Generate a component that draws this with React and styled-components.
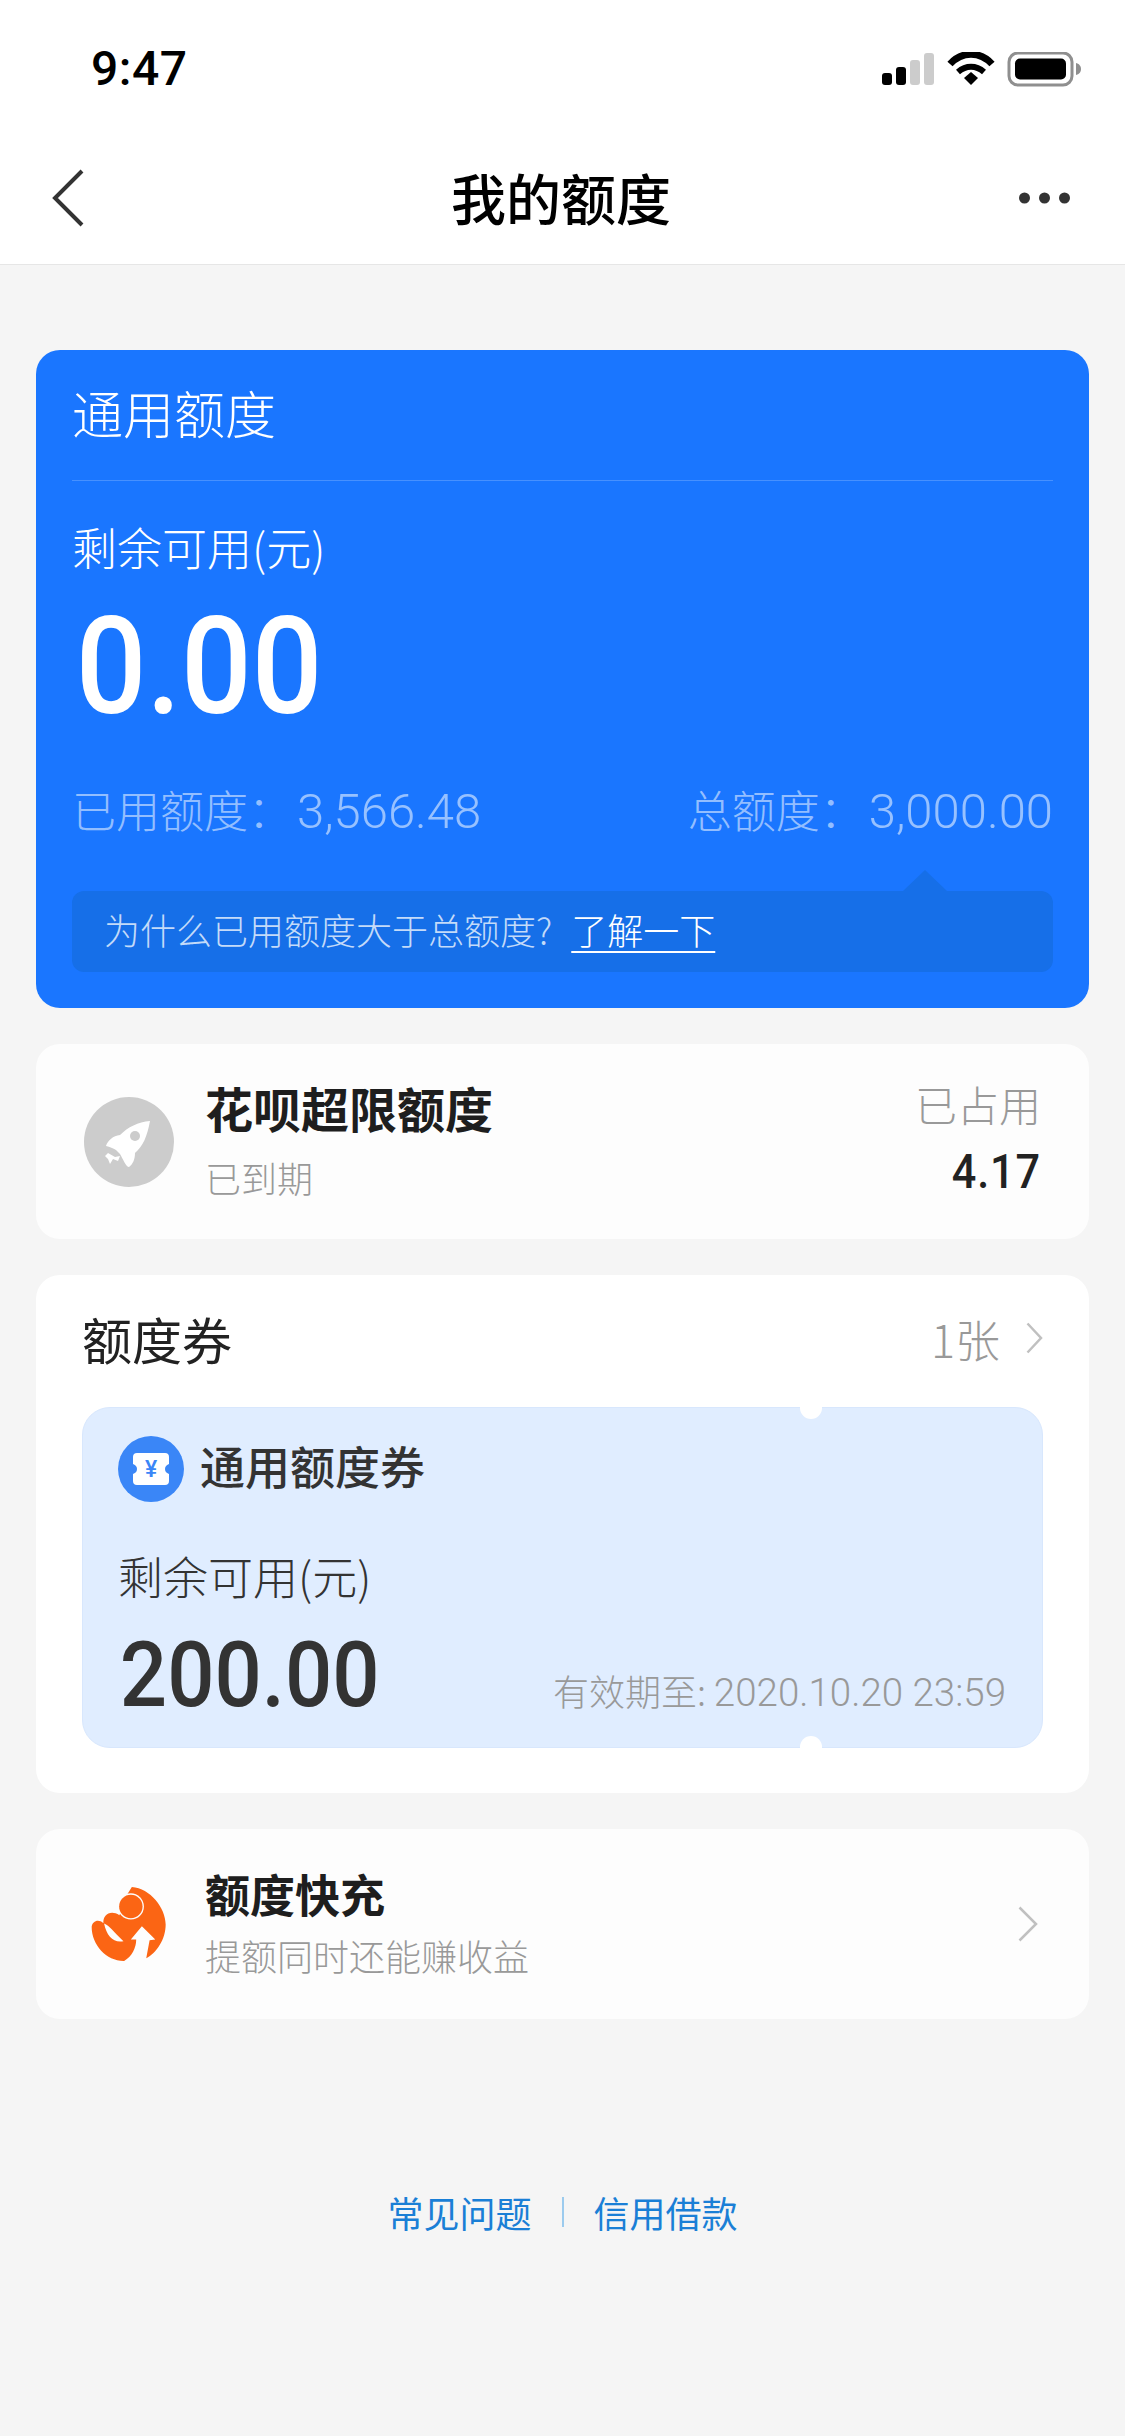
import React from 'react';
import styled, { createGlobalStyle } from 'styled-components';

const GlobalStyle = createGlobalStyle`
  html, body {
    margin: 0;
    padding: 0;
    background: #f5f5f5;
  }
  body {
    font-family: 'Noto Sans CJK SC', 'Noto Sans', sans-serif;
  }
  * {
    box-sizing: border-box;
  }
`;

const Page = styled.div`
  width: 1125px;
  height: 2436px;
  overflow: hidden;
  background: #f5f5f5;
`;

const TopArea = styled.header`
  background: #fff;
  border-bottom: 1px solid #e6e6e6;
`;

const StatusBar = styled.div`
  height: 132px;
  padding: 46px 43px 0 91px;
  display: flex;
  justify-content: space-between;
  align-items: flex-start;
`;

const Clock = styled.span`
  font-family: Roboto, sans-serif;
  font-size: 48px;
  line-height: 46px;
  font-weight: 500;
  letter-spacing: 0.5px;
  color: #000;
`;

const NavBar = styled.nav`
  height: 132px;
  padding: 0 55px 0 52px;
  display: grid;
  grid-template-columns: 100px 1fr 100px;
  align-items: center;
`;

const NavTitle = styled.h1`
  margin: 0;
  padding-bottom: 5px;
  text-align: center;
  font-size: 55px;
  line-height: 70px;
  font-weight: 500;
  color: #000;
`;

const NavRight = styled.div`
  display: flex;
  justify-content: flex-end;
`;

const Content = styled.main`
  padding: 85px 36px 0;
  display: flex;
  flex-direction: column;
  gap: 36px;
`;

const QuotaCard = styled.section`
  background: #1a76ff;
  border-radius: 24px;
  padding: 0 36px 36px;
  color: #fff;
`;

const QuotaHeader = styled.div`
  height: 131px;
  border-bottom: 1px solid rgba(255, 255, 255, 0.2);
  font-size: 51px;
  line-height: 124px;
  font-weight: 300;
`;

const QuotaLabel = styled.div`
  margin-top: 36px;
  font-size: 45px;
  line-height: 60px;
  font-weight: 300;
`;

// the DIN-style figures run narrower than Roboto
const Figures = styled.div`
  font-family: Roboto, sans-serif;
  font-weight: 500;
  transform: scaleX(${(p) => p.$squeeze});
  transform-origin: ${(p) => p.$origin || 'left'} center;
`;

const QuotaAmount = styled(Figures)`
  margin-top: 25px;
  padding-left: 4px;
  font-size: 136px;
  line-height: 130px;
`;

const QuotaStats = styled.div`
  margin-top: 47px;
  height: 60px;
  display: flex;
  justify-content: space-between;
  font-size: 44px;
  line-height: 60px;
  font-weight: 300;
  color: rgba(255, 255, 255, 0.55);
`;

const StatNumber = styled.span`
  margin-left: 5px;
  font-family: Roboto, sans-serif;
  font-size: 49px;
  font-weight: 300;
`;

const TipBox = styled.div`
  position: relative;
  margin-top: 52px;
  height: 81px;
  padding-left: 32px;
  background: #166fe8;
  border-radius: 12px;
  font-size: 36px;
  line-height: 77px;
  font-weight: 300;
  color: rgba(255, 255, 255, 0.75);

  &::before {
    content: '';
    position: absolute;
    top: -21px;
    right: 106px;
    border-left: 22px solid transparent;
    border-right: 22px solid transparent;
    border-bottom: 21px solid #166fe8;
  }
`;

const TipLink = styled.a`
  margin-left: 19px;
  color: #fff;
  text-decoration: underline;
  text-underline-offset: 6px;
  text-decoration-thickness: 2px;
`;

const RowCard = styled.section`
  height: ${(p) => p.$height}px;
  padding: 0 48px;
  background: #fdfdfd;
  border-radius: 24px;
  display: flex;
  align-items: center;
`;

const RocketBadge = styled.div`
  width: 90px;
  height: 90px;
  margin-right: 31px;
  flex: none;
  border-radius: 50%;
  background: #cccccc;
`;

const RowText = styled.div`
  flex: 1;
  padding-bottom: 4px;
`;

const RowTitle = styled.div`
  font-size: ${(p) => p.$size}px;
  line-height: 60px;
  font-weight: 700;
  color: #1e1e1e;
`;

const RowSub = styled.div`
  margin-top: ${(p) => p.$gap}px;
  font-size: 36px;
  line-height: 50px;
  font-weight: 300;
  color: #999;
`;

const RowAside = styled.div`
  text-align: right;
`;

const AsideLabel = styled.div`
  margin-top: -8px;
  font-size: 42px;
  line-height: 50px;
  font-weight: 300;
  color: #999;
`;

const AsideValue = styled(Figures)`
  margin-top: 18px;
  font-size: 48px;
  line-height: 50px;
  letter-spacing: 1px;
  color: #222;
`;

const CouponCard = styled.section`
  padding: 0 46px 45px;
  background: #fff;
  border-radius: 24px;
`;

const CouponHeader = styled.div`
  height: 132px;
  padding-bottom: 6px;
  display: flex;
  align-items: center;
  justify-content: space-between;
`;

const CouponTitle = styled.div`
  font-size: 50px;
  font-weight: 400;
  color: #222;
`;

const CouponCount = styled.div`
  display: flex;
  align-items: center;
  gap: 26px;
  font-size: 45px;
  font-weight: 300;
  color: #999;
`;

const Ticket = styled.div`
  position: relative;
  height: 341px;
  padding: 28px 36px 0 35px;
  background: #e0edff;
  border: 1px solid #d8e7fd;
  border-radius: 28px;

  &::before,
  &::after {
    content: '';
    position: absolute;
    left: 717px;
    width: 22px;
    height: 24px;
    background: #fff;
    border-radius: 11px;
  }
  &::before {
    top: -13px;
  }
  &::after {
    bottom: -13px;
  }
`;

const TicketHead = styled.div`
  display: flex;
  align-items: center;
  gap: 16px;
  font-size: 44px;
  line-height: 60px;
  font-weight: 500;
  color: #333;
`;

const TicketName = styled.span`
  padding-bottom: 6px;
  font-size: 45px;
`;

const TicketLabel = styled.div`
  margin-top: 44px;
  font-size: 45px;
  line-height: 60px;
  font-weight: 300;
  color: #333;
`;

const TicketBottom = styled.div`
  margin-top: 20px;
  display: flex;
  justify-content: space-between;
  align-items: baseline;
`;

const TicketAmount = styled(Figures)`
  font-size: 90px;
  line-height: 100px;
  color: #333;
  padding-left: 2px;
`;

const TicketDate = styled.div`
  font-size: 36px;
  font-weight: 300;
  color: #999;
`;

const DateDigits = styled.span`
  font-family: Roboto, sans-serif;
  font-size: 38.5px;
  font-weight: 300;
`;

const BoostIcon = styled.svg`
  width: 77px;
  height: 77px;
  margin: 0 38px 0 6px;
  flex: none;
`;

const RowChevron = styled.div`
  margin-right: 3px;
  display: flex;
`;

const Footer = styled.footer`
  margin-top: 173px;
  display: flex;
  justify-content: center;
  align-items: center;
  font-size: 36px;
  line-height: 40px;
  font-weight: 400;
  color: #1a7fd6;
`;

const FooterSep = styled.span`
  width: 2px;
  height: 30px;
  margin: 0 30px;
  background: #9ccbee;
`;

const Chevron = ({ color = '#c0c0c0', width = 17, height = 32, strokeWidth = 2.5 }) => (
  <svg width={width} height={height} viewBox={`0 0 ${width} ${height}`} fill="none">
    <path
      d={`M1.5 1.5 L${width - 2} ${height / 2} L1.5 ${height - 1.5}`}
      stroke={color}
      strokeWidth={strokeWidth}
    />
  </svg>
);

const StatusIcons = () => (
  <svg width="200" height="36" viewBox="0 0 200 36" style={{ marginTop: 6 }}>
    <rect x="0" y="21" width="10" height="12" rx="3" fill="#000" />
    <rect x="14" y="15" width="10" height="18" rx="3" fill="#000" />
    <rect x="28" y="8" width="10" height="25" rx="3" fill="#ccc" />
    <rect x="42" y="1" width="10" height="32" rx="3" fill="#ccc" />
    <path d="M68 12 C80 -1 98 -1 110 12" fill="none" stroke="#000" strokeWidth="7" />
    <path d="M76 20 C84 13 94 13 102 20" fill="none" stroke="#000" strokeWidth="6" />
    <path d="M82 26 L89 20 L96 26 L89 33 Z" fill="#000" />
    <rect x="127" y="1" width="63" height="32" rx="9" fill="none" stroke="#8f8f8f" strokeWidth="3" />
    <rect x="133" y="6.5" width="51" height="21" rx="5" fill="#000" />
    <path d="M194 11 C198 12 199 15 199 17 C199 19 198 22 194 23 Z" fill="#8f8f8f" />
  </svg>
);

const RocketIcon = () => (
  <svg width="90" height="90" viewBox="0 0 90 90">
    <path
      d="M66 24 C63 40 59 49 51 56 C51 62 49 67 45 70 C42 70 39 62 36 57 L32 53 C29 51 26 50 22 49 C24 43 29 39 36 38 C44 30 54 25 66 24 Z"
      fill="#fff"
    />
    <circle cx="51" cy="39" r="5" fill="#ccc" />
    <path d="M24 56 L31 60 L36 59 L34 64 L29 62 L26 67 L24 62 L21 59 Z" fill="#fff" />
  </svg>
);

const TicketIcon = () => (
  <svg width="66" height="66" viewBox="0 0 66 66" style={{ flex: 'none' }}>
    <circle cx="33" cy="33" r="33" fill="#3a86f7" />
    <path
      d="M19 17 H47 A4 4 0 0 1 51 21 V28 C48 29 47 31 47 33 C47 35 48 37 51 38 V45 A4 4 0 0 1 47 49 H19 A4 4 0 0 1 15 45 V38 C18 37 19 35 19 33 C19 31 18 29 15 28 V21 A4 4 0 0 1 19 17 Z"
      fill="#fff"
    />
    <text x="33" y="41" textAnchor="middle" fontSize="23" fontWeight="500" fontFamily="Roboto, sans-serif" fill="#3a86f7">
      ¥
    </text>
  </svg>
);

const BoostLogo = () => (
  <BoostIcon viewBox="90 85 230 230">
    <path
      d="M215 88 C270 92 316 150 316 200 C316 245 288 285 258 301 L268 247 L285 245 L245 205 L212 245 L228 245 C228 270 215 296 192 309 C140 310 95 262 95 207 C97 190 115 182 130 196 C128 172 150 155 178 172 L195 120 Z"
      fill="#fb6514"
    />
    <path d="M132 197 C148 203 160 222 190 250 C160 256 140 235 132 197 Z" fill="#fdfdfd" />
    <circle cx="212" cy="146" r="39" fill="#fdfdfd" />
    <circle cx="212" cy="146" r="35" fill="#fb6514" />
  </BoostIcon>
);

export default function App() {
  return (
    <Page>
      <GlobalStyle />
      <TopArea>
        <StatusBar>
          <Clock>9:47</Clock>
          <StatusIcons />
        </StatusBar>
        <NavBar>
          <svg width="32" height="58" viewBox="0 0 32 58" fill="none">
            <path d="M30 2 L3 29 L30 56" stroke="#333" strokeWidth="4" />
          </svg>
          <NavTitle>我的额度</NavTitle>
          <NavRight>
            <svg width="51" height="12" viewBox="0 0 51 12">
              <circle cx="5.5" cy="6" r="5.5" fill="#333" />
              <circle cx="25.5" cy="6" r="5.5" fill="#333" />
              <circle cx="45.5" cy="6" r="5.5" fill="#333" />
            </svg>
          </NavRight>
        </NavBar>
      </TopArea>

      <Content>
        <QuotaCard>
          <QuotaHeader>通用额度</QuotaHeader>
          <QuotaLabel>剩余可用(元)</QuotaLabel>
          <QuotaAmount $squeeze={0.915}>0.00</QuotaAmount>
          <QuotaStats>
            <span>
              已用额度：<StatNumber>3,566.48</StatNumber>
            </span>
            <span>
              总额度：<StatNumber>3,000.00</StatNumber>
            </span>
          </QuotaStats>
          <TipBox>
            为什么已用额度大于总额度?
            <TipLink>了解一下</TipLink>
          </TipBox>
        </QuotaCard>

        <RowCard $height={195}>
          <RocketBadge>
            <RocketIcon />
          </RocketBadge>
          <RowText>
            <RowTitle $size={48}>花呗超限额度</RowTitle>
            <RowSub $gap={15}>已到期</RowSub>
          </RowText>
          <RowAside>
            <AsideLabel>已占用</AsideLabel>
            <AsideValue $squeeze={0.9} $origin="right">4.17</AsideValue>
          </RowAside>
        </RowCard>

        <CouponCard>
          <CouponHeader>
            <CouponTitle>额度券</CouponTitle>
            <CouponCount>
              1张
              <Chevron />
            </CouponCount>
          </CouponHeader>
          <Ticket>
            <TicketHead>
              <TicketIcon />
              <TicketName>通用额度券</TicketName>
            </TicketHead>
            <TicketLabel>剩余可用(元)</TicketLabel>
            <TicketBottom>
              <TicketAmount $squeeze={0.925}>200.00</TicketAmount>
              <TicketDate>
                有效期至: <DateDigits>2020.10.20 23:59</DateDigits>
              </TicketDate>
            </TicketBottom>
          </Ticket>
        </CouponCard>

        <RowCard $height={190}>
          <BoostLogo />
          <RowText>
            <RowTitle $size={45}>额度快充</RowTitle>
            <RowSub $gap={6}>提额同时还能赚收益</RowSub>
          </RowText>
          <RowChevron>
            <Chevron width={20} height={36} />
          </RowChevron>
        </RowCard>
      </Content>

      <Footer>
        常见问题
        <FooterSep />
        信用借款
      </Footer>
    </Page>
  );
}
